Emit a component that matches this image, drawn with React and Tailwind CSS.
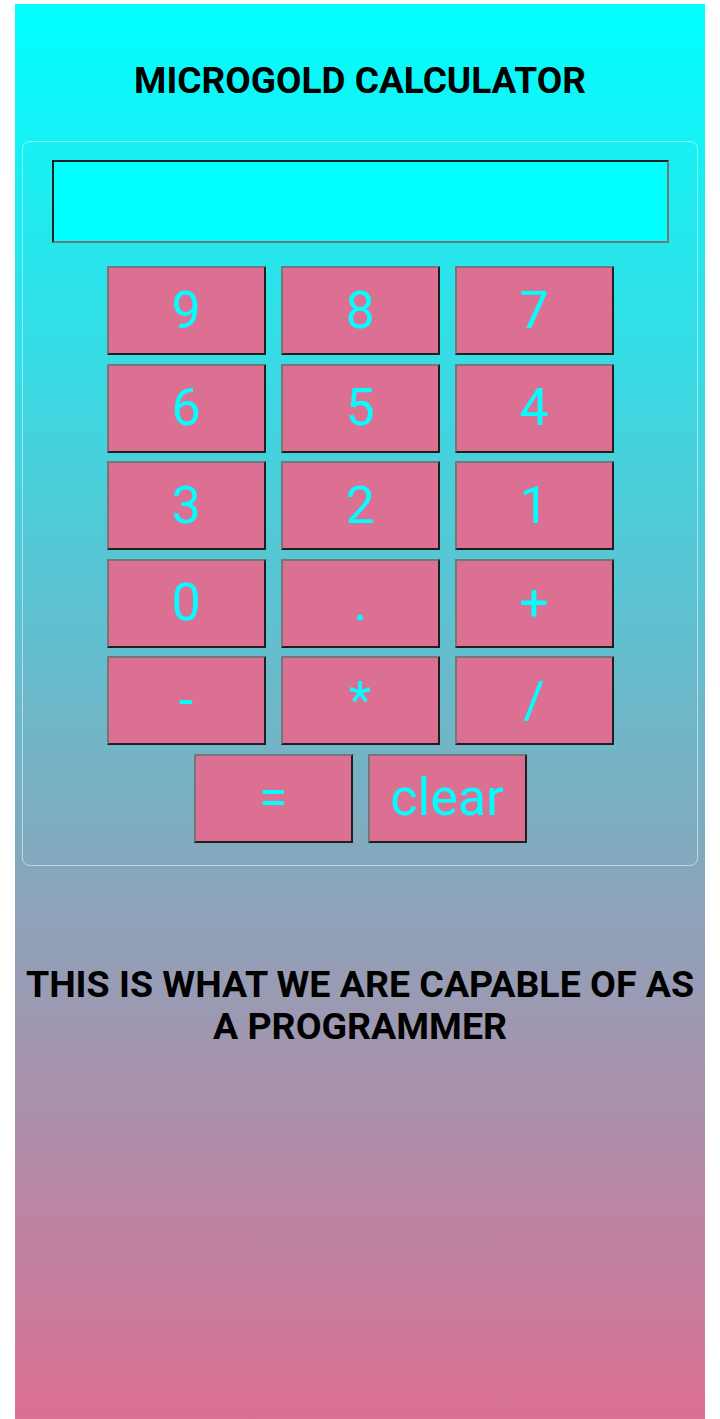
import React from 'react';

const rows = [
  ['9', '8', '7'],
  ['6', '5', '4'],
  ['3', '2', '1'],
  ['0', '.', '+'],
  ['-', '*', '/'],
];

function Key({ label }) {
  return (
    <button
      className="w-[159px] h-[89px] bg-[#db7093] text-[#00ffff] text-[52px] leading-none font-normal border-2 border-t-[#767676] border-l-[#767676] border-b-[#1f1f1f] border-r-[#1f1f1f] flex items-center justify-center"
    >
      {label}
    </button>
  );
}

export default function App() {
  return (
    <div className="bg-white min-h-[1419px] pt-[4px] px-[15px]" style={{ fontFamily: 'Roboto, "Liberation Sans", sans-serif' }}>
      <div className="h-[1415px] bg-[linear-gradient(to_bottom,#00ffff,#db7093)] px-[7px] pt-[55px]">
        <h2 className="text-center text-[37px] font-bold leading-[44px] text-black">MICROGOLD CALCULATOR</h2>

        <div className="mt-[38px] h-[725px] border border-white/50 rounded-[8px] pt-[18px] flex flex-col items-center">
          <div className="w-[617px] h-[83px] bg-[#00ffff] border-2 border-t-[#1f1f1f] border-l-[#1f1f1f] border-b-[#767676] border-r-[#767676]" />

          <div className="mt-[23px] flex flex-col gap-[8.6px]">
            {rows.map((row, i) => (
              <div key={i} className="flex gap-[15px] justify-center">
                {row.map(k => <Key key={k} label={k} />)}
              </div>
            ))}
            <div className="flex gap-[15px] justify-center">
              <Key label="=" />
              <Key label="clear" />
            </div>
          </div>
        </div>

        <p className="mt-[97px] px-[2px] text-center text-[37.5px] font-bold leading-[42px] text-black">
          THIS IS WHAT WE ARE CAPABLE OF AS A PROGRAMMER
        </p>
      </div>
    </div>
  );
}
